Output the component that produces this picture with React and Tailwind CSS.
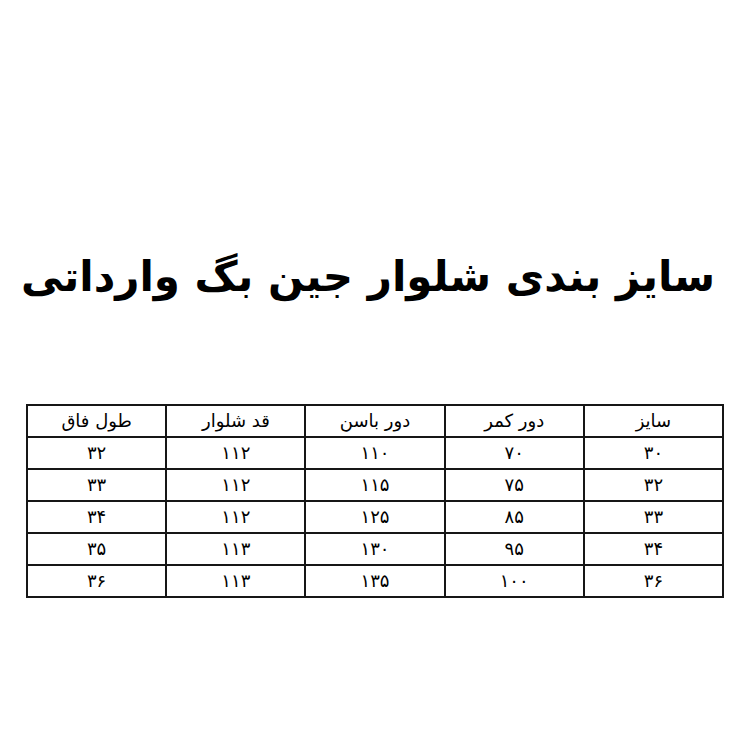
export default function App() {
  const headers = ["سایز", "دور کمر", "دور باسن", "قد شلوار", "طول فاق"];
  const rows = [
    ["۳۰", "۷۰", "۱۱۰", "۱۱۲", "۳۲"],
    ["۳۲", "۷۵", "۱۱۵", "۱۱۲", "۳۳"],
    ["۳۳", "۸۵", "۱۲۵", "۱۱۲", "۳۴"],
    ["۳۴", "۹۵", "۱۳۰", "۱۱۳", "۳۵"],
    ["۳۶", "۱۰۰", "۱۳۵", "۱۱۳", "۳۶"],
  ];
  return (
    <div className="w-[750px] h-[750px] bg-white flex flex-col items-center text-black" style={{ fontFamily: '"DejaVu Sans", sans-serif' }}>
      <h1 dir="rtl" className="mt-[244px] mr-[14px] h-[66px] text-[42px] leading-[66px] font-bold whitespace-nowrap">
        سایز بندی شلوار جین بگ وارداتی
      </h1>
      <table dir="rtl" className="mt-[94px] w-[698px] border-collapse border-2 border-[#161616] table-fixed">
        <thead>
          <tr>
            {headers.map((h, i) => (
              <th key={i} className="h-[32px] border-2 border-[#161616] font-normal text-[18px] leading-none p-0 text-center align-middle">
                {h}
              </th>
            ))}
          </tr>
        </thead>
        <tbody>
          {rows.map((r, ri) => (
            <tr key={ri}>
              {r.map((c, ci) => (
                <td key={ci} className="h-[32px] border-2 border-[#161616] text-[18px] leading-none p-0 text-center align-middle">
                  {c}
                </td>
              ))}
            </tr>
          ))}
        </tbody>
      </table>
    </div>
  );
}
